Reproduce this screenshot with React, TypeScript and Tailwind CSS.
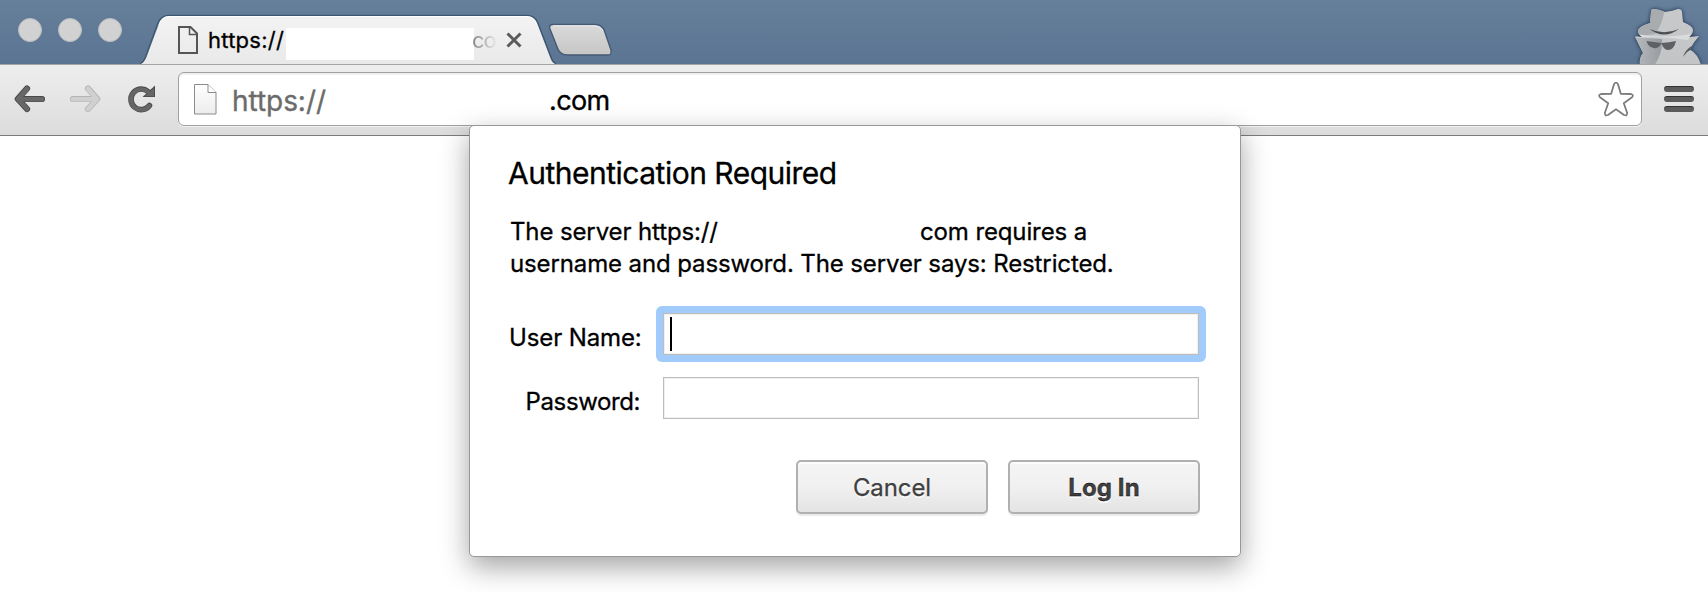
import type { ReactNode } from "react";

function TabShape() {
  return (
    <svg className="absolute inset-0 block" width="420" height="50" viewBox="0 0 420 50">
      <defs>
        <linearGradient id="tab-fill" x1="0" y1="0" x2="0" y2="1">
          <stop offset="0" stopColor="#f3f3f3" />
          <stop offset="1" stopColor="#e9e9e9" />
        </linearGradient>
      </defs>
      <path d="M2 50 Q6 49 8.500 43 L20.500 11 Q23.500 2 31 2 H389 Q396 2 399 9 L412 43 Q414 49 418 50 Z" fill="url(#tab-fill)" />
      <path d="M2 49.500 Q5 49 7.500 43 L19.500 10 Q22.500 1.300 31 1.300 H389 Q397 1.300 400 9 L413 43 Q415 49 418 49.500" fill="none" stroke="#3f556f" strokeWidth="1.200" />
      <path d="M21 10.500 Q24 2.500 31 2.500 H389 Q395 2.500 398 9" fill="none" stroke="#fff" />
    </svg>
  );
}

function NewTab() {
  return (
    <svg className="mt-[22px] ml-[-12px] block shrink-0" width="68" height="36" viewBox="0 0 68 36">
      <defs>
        <linearGradient id="new-tab-fill" x1="0" y1="0" x2="0" y2="1">
          <stop offset="0" stopColor="#dadada" />
          <stop offset="1" stopColor="#c6c6c6" />
        </linearGradient>
      </defs>
      <path d="M7 2.500 H49 Q56 2.500 58.500 9 L65 28 Q66 33 62 33 H22 Q14 33 11.500 26 L4 7 Q2.500 2.500 7 2.500 Z" fill="url(#new-tab-fill)" stroke="#445a74" strokeWidth="1.400" />
      <path d="M7 3.800 H48 Q54.500 3.800 57 9" fill="none" stroke="#f0f0f0" />
    </svg>
  );
}

function Incognito() {
  return (
    <svg width="77" height="64" viewBox="0 0 77 64" className="block">
      <defs>
        <linearGradient id="hat-light" x1="0" y1="0" x2="0" y2="1">
          <stop offset="0" stopColor="#c9cacc" />
          <stop offset="1" stopColor="#c2c4c6" />
        </linearGradient>
        <linearGradient id="coat-shade" x1="0" y1="0" x2="1" y2="0">
          <stop offset="0" stopColor="#bbbec1" />
          <stop offset="1" stopColor="#989b9f" />
        </linearGradient>
        <clipPath id="figure">
          <path d="M20 12 Q20 9 23 9 Q29 9.500 34 12 Q42 11 47 9 Q50.500 8.500 51 12 L52 22 Q62 26 62 30 Q62 34 58 37 L68 36 Q62 43 59 49.500 Q67 54 70 65 H9 Q8 58 12 53 L4 36.500 L11 37 Q7 34 7 31 Q8 26 19 23 Z" />
        </clipPath>
      </defs>
      <g className="drop-shadow-[0_0_2px_rgba(20,35,60,0.9)]">
        <g clipPath="url(#figure)">
          <rect width="77" height="66" fill="url(#hat-light)" />
          <path d="M0 0 H34 Q34 22 24 34 L0 37 Z" fill="#a9acaf" />
          <path d="M6 34 Q30 39 60 34 L57 40 Q30 36 5 38 Z" fill="#dadbdc" />
          <path d="M0 37 L31 39 Q32 53 23 66 H0 Z" fill="url(#coat-shade)" />
          <path d="M52 57 Q54 50 62 45 L60 50 Q57 50 52 57 Z" fill="#55585d" />
        </g>
      </g>
      <path d="M18.500 29 Q33 35.500 48 29 Q33 40 18.500 29 Z" fill="#4b4e53" />
      <path d="M15.500 41 L30.500 43 Q28 49 23 48 Q17 47 15.500 41 Z M30.500 43 Q38 42.500 45 41 Q43 50 37 50 Q32 49.500 30.500 43 Z" fill="#5e6064" />
    </svg>
  );
}

function TabPageIcon() {
  return (
    <svg width="20" height="28" viewBox="0 0 20 28" fill="none" stroke="#555" strokeWidth="2" className="block shrink-0">
      <path d="M1 1H12.500L19 7.500V27H1Z" />
      <path d="M11.500 1.500V8.500H18.500" strokeWidth="1.500" />
    </svg>
  );
}

function AddressPageIcon() {
  return (
    <svg width="23" height="31" viewBox="0 0 23 31" className="block shrink-0">
      <defs>
        <linearGradient id="page-fill" x1="0" y1="0" x2="0" y2="1">
          <stop offset="0" stopColor="#fff" />
          <stop offset="1" stopColor="#ececec" />
        </linearGradient>
      </defs>
      <path d="M.5 .5H14L22 8.500V30H.5Z" fill="url(#page-fill)" stroke="#8c8c8c" />
      <path d="M14 .5V8.500H22" fill="#fff" stroke="#8c8c8c" />
    </svg>
  );
}

function Arrow({ flip = false, faded = false }: { flip?: boolean; faded?: boolean }) {
  return (
    <svg width="32" height="30" viewBox="0 0 32 30" fill="none" strokeLinecap="round" strokeLinejoin="round" className={flip ? "block -scale-x-100" : "block"}>
      <g stroke={faded ? "#b5b5b5" : "#484848"} strokeWidth="6.200">
        <path d="M28 15H5" />
        <path d="M13 4.500L3.800 15L13 25" />
      </g>
      <g stroke={faded ? "#d0d0d0" : "#686868"} strokeWidth="4.600">
        <path d="M28 15.200H5" />
        <path d="M13 4.700L4 15.200L13 25" />
      </g>
    </svg>
  );
}

function Reload() {
  return (
    <svg width="30" height="30" viewBox="0 0 30 30" fill="none" className="block">
      <path d="M22.500 21.500A10.300 10.300 0 1 1 21 7.500" stroke="#4b4b4b" strokeWidth="5.600" strokeLinecap="round" />
      <path d="M28 1.500V13H15.500Z" fill="#4b4b4b" />
      <path d="M22.500 21.700A10.300 10.300 0 1 1 21 7.800" stroke="#666" strokeWidth="4" strokeLinecap="round" />
      <path d="M27 4V12.200H17.800Z" fill="#666" />
    </svg>
  );
}

function Star() {
  return (
    <svg width="36" height="36" viewBox="0 0 36 36" fill="#fff" stroke="#7d7d7d" strokeWidth="1.800" strokeLinejoin="round" className="block">
      <path d="M16 3.200Q18 .2 20 3.200L22.800 12.800L33 13Q36 14 34 16.200L25.800 22.300L29.200 32Q29 35.300 26 34L18 28.300L10 34Q7 35.300 6.800 32L10.200 22.300L2 16.200Q0 14 3 13L13.200 12.800Z" />
    </svg>
  );
}

function DialogButton({ children, bold = false }: { children: ReactNode; bold?: boolean }) {
  return (
    <button
      className={`h-[54px] w-48 rounded-[5px] border-2 border-[#b0b0b0] bg-linear-to-b from-[#f5f5f5] via-[#f0f0f0] to-[#e4e4e4] pt-0.5 text-2xl leading-8 text-[#404040] shadow-[0_2px_0_#ececec,inset_0_2px_1px_rgba(255,255,255,0.8)] [text-shadow:0_2px_0_#fafafa] ${bold ? "font-bold tracking-[0.1px]" : "tracking-[-0.1px] [-webkit-text-stroke:0.25px_#404040]"}`}
    >
      {children}
    </button>
  );
}

export default function App() {
  return (
    <div className="relative h-[592px] w-[1708px] overflow-hidden bg-white font-['Inter',sans-serif] text-black">
      <header className="flex h-16 bg-linear-to-b from-[#66809b] to-[#5a7492]">
        <div className="flex w-[138px] shrink-0 gap-4 pt-[18px] pl-[18px]">
          {["close", "minimize", "zoom"].map((name) => (
            <span key={name} className="size-6 rounded-full border border-[#b9bdc2] bg-[#d2d2d2]" />
          ))}
        </div>
        <div className="relative mt-3.5 h-[50px] w-[420px] shrink-0">
          <TabShape />
          <div className="relative flex h-[50px] items-center pt-0.5 pl-10">
            <TabPageIcon />
            <span className="ml-2.5 w-[78px] text-[22px] leading-[30px] tracking-[0.25px] whitespace-nowrap [-webkit-text-stroke:0.3px_#000]">https://</span>
            <span className="mt-3 h-8 w-[188px] shrink-0 self-start bg-white" />
            <span className="-ml-0.5 w-[26px] shrink-0 bg-linear-to-r from-[#858585] to-[#eeeeee] bg-clip-text text-[22px] leading-[30px] tracking-[-1px] text-transparent">co</span>
            <svg width="16" height="16" viewBox="0 0 16 16" className="ml-2 block shrink-0" stroke="#5b5b5b" strokeWidth="3">
              <path d="M1.500 1.500L14.500 14.500M14.500 1.500L1.500 14.500" />
            </svg>
          </div>
        </div>
        <NewTab />
        <div className="ml-auto">
          <Incognito />
        </div>
      </header>

      <nav className="flex h-[72px] items-center border-t border-b border-t-[#a5a5a5] border-b-[#7b7b7b] bg-linear-to-b from-[#eeeeee] to-[#dcdcdc] pb-0.5 pl-3.5">
        <div className="flex w-[164px] items-center">
          <Arrow />
          <div className="ml-[23px]"><Arrow flip faded /></div>
          <div className="ml-[26px]"><Reload /></div>
        </div>
        <div className="flex h-[54px] w-[1464px] items-center rounded-[6px] border border-[#a0a0a0] bg-white pl-[15px] shadow-[inset_0_2px_1px_#f0f0f0,0_1px_0_#f2f2f2]">
          <AddressPageIcon />
          <span className="ml-[15px] w-[317px] pt-[3px] text-[28px] leading-9 tracking-[-0.05px] text-[#6b6b6b] [-webkit-text-stroke:0.35px_#6b6b6b]">https://</span>
          <span className="pt-[3px] text-[27px] leading-9 tracking-[-0.6px] [-webkit-text-stroke:0.35px_#000]">.com</span>
          <div className="mr-[7px] ml-auto"><Star /></div>
        </div>
        <div className="ml-[22px] flex flex-col gap-1">
          {["top", "middle", "bottom"].map((name) => (
            <span key={name} className="h-1.5 w-[30px] rounded-[3px] border-t border-[#333] bg-[#5c5c5c]" />
          ))}
        </div>
      </nav>

      <div
        role="dialog"
        className="absolute top-[125px] left-[469px] h-[432px] w-[772px] rounded-[5px] border border-[#989898] bg-white pt-[29px] pl-[39px] shadow-[0_10px_28px_rgba(0,0,0,0.36)] [-webkit-text-stroke:0.3px_#000]"
      >
        <h1 className="-ml-px text-[30px] leading-9 tracking-[-0.5px]">Authentication Required</h1>
        <div className="mt-[25px] pl-px text-2xl leading-8 tracking-[-0.12px]">
          <p className="flex">
            <span className="w-[410px]">The server https://</span>
            <span>com requires a</span>
          </p>
          <p>username and password. The server says: Restricted.</p>
        </div>
        <form className="mt-[26px]" onSubmit={(event) => event.preventDefault()}>
          <div className="flex h-14 items-center">
            <label className="w-[131px] pt-[7px] text-right text-2xl leading-8 tracking-[-0.12px] whitespace-nowrap">User Name:</label>
            <div className="ml-4 h-14 w-[550px] rounded-[6px] bg-[#a0cbfa] p-[7px]">
              <div className="flex h-[42px] items-center border border-[#bdbdbd] bg-white pl-1.5 shadow-[inset_0_0_0_1px_#f0f0f0]">
                <span className="h-[34px] w-0.5 bg-black" />
              </div>
            </div>
          </div>
          <div className="mt-[15px] flex h-[42px] items-center">
            <label className="w-[131px] pt-[7px] text-right text-2xl leading-8 tracking-[-0.4px]">Password:</label>
            <div className="ml-[23px] h-[42px] w-[536px] border border-[#bdbdbd] bg-white shadow-[inset_0_0_0_1px_#f0f0f0]" />
          </div>
          <div className="mt-[41px] flex gap-5 pl-[287px]">
            <DialogButton>Cancel</DialogButton>
            <DialogButton bold>Log In</DialogButton>
          </div>
        </form>
      </div>
    </div>
  );
}
